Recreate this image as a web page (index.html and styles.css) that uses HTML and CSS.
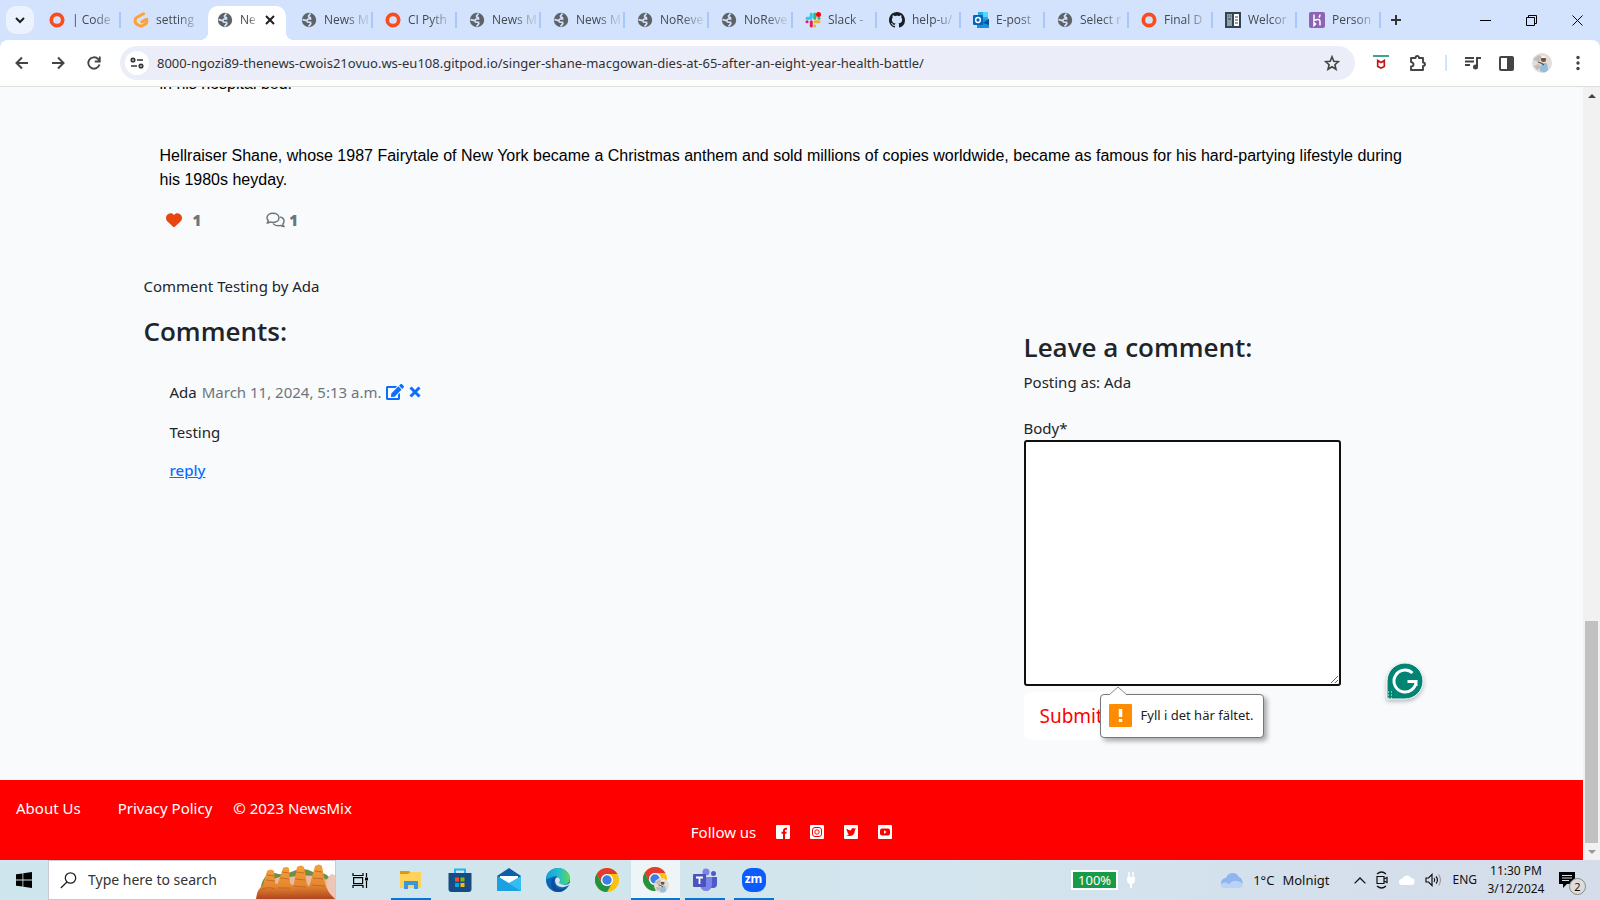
FILE: index.html
```html
<!DOCTYPE html>
<html lang="en">
<head>
<meta charset="utf-8">
<title>NewsMix</title>
<link rel="stylesheet" href="styles.css">
</head>
<body>
<svg class="defs" aria-hidden="true">
  <defs>
    <symbol id="globe" viewBox="0 0 16 16"><circle cx="8" cy="8" r="7.2" fill="#5f6368"/><path d="M9.500 1.500 7.500 4q0 1.500 1.800 1.500L9.500 7H7L5.500 8.500l-4-.8M5.500 8.500l1 1.500 3 .3.300 1.500-2.300 2.700" fill="none" stroke="#d3e3fd" stroke-width="1.700"/></symbol>
    <symbol id="ring" viewBox="0 0 16 16"><circle cx="8" cy="8" r="5.7" fill="none" stroke="#fc4c1e" stroke-width="3.7"/></symbol>
    <symbol id="chrome" viewBox="0 0 24 24"><circle cx="12" cy="12" r="12" fill="#fbc116"/><path d="M1.6 6A12 12 0 0 1 22.4 6H12A6 6 0 0 0 6.8 15z" fill="#e33b2e"/><path d="M1.6 6 6.8 15A6 6 0 0 0 17.2 15L12 24A12 12 0 0 1 1.6 6z" fill="#229342"/><circle cx="12" cy="12" r="6" fill="#fff"/><circle cx="12" cy="12" r="4.7" fill="#3b7de9"/></symbol>
    <symbol id="person" viewBox="0 0 20 20"><circle cx="10" cy="10" r="10" fill="#e2ddd8"/><path d="M1 6l6-4 4 3-5 4zM2 13l5-2 2 4-4 2z" fill="#c4bdb7"/><path d="M8 18c0-6 1-7 4-8s4 3 4 7c-2 3-5 3-8 1z" fill="#93bfdc"/><circle cx="11.500" cy="6.500" r="2.500" fill="#74513f"/><path d="M9 5c1-3 4-3 5 0z" fill="#f5f5f5"/><path d="M6 9l4 1.500 2 1.500" fill="none" stroke="#65483d" stroke-width="1.200"/></symbol>
  </defs>
</svg>

<header class="browser">
  <nav class="tabs" aria-label="Tabs">
    <button class="tab-search" aria-label="Search tabs"><svg width="10" height="8" viewBox="0 0 10 8"><path d="M1 2l4 4 4-4" fill="none" stroke="#1f1f1f" stroke-width="2"/></svg></button>
    <button class="tab"><svg class="fav"><use href="#ring"/></svg><span>| Code</span></button>
    <button class="tab last-before"><svg class="fav" viewBox="0 0 16 16"><path d="M10.500 1.800 4 5.300q-1.800 1-1.800 2.800v1.600q0 1.600 1.500 2.400l3 1.700q1.300.7 2.600 0l3-1.700q1.500-.8 1.500-2.400V7.200L8.900 9.800" fill="none" stroke="#ffa133" stroke-width="3" stroke-linejoin="round" stroke-linecap="round"/></svg><span>setting</span></button>
    <button class="tab active"><svg class="fav"><use href="#globe"/></svg><span>Ne</span><svg class="close" width="10" height="10" viewBox="0 0 10 10"><path d="M1 1l8 8M9 1L1 9" stroke="#1f1f1f" stroke-width="2"/></svg></button>
    <button class="tab"><svg class="fav"><use href="#globe"/></svg><span>News M</span></button>
    <button class="tab"><svg class="fav"><use href="#ring"/></svg><span>CI Pyth</span></button>
    <button class="tab"><svg class="fav"><use href="#globe"/></svg><span>News M</span></button>
    <button class="tab"><svg class="fav"><use href="#globe"/></svg><span>News M</span></button>
    <button class="tab"><svg class="fav"><use href="#globe"/></svg><span>NoReve</span></button>
    <button class="tab"><svg class="fav"><use href="#globe"/></svg><span>NoReve</span></button>
    <button class="tab"><svg class="fav" viewBox="0 0 16 16" fill="none" stroke-width="3" stroke-linecap="round"><path d="M6.300 2v3.500M2 6.300h4" stroke="#36c5f0"/><path d="M9.800 2v4.300M14 6.300h-.1" stroke="#2eb67d"/><path d="M10 9.800h4M9.800 14v-.1" stroke="#ecb22e"/><path d="M6.300 14V9.800M2 9.800h.1" stroke="#e01e5a"/><circle cx="13.500" cy="2.500" r="2.500" fill="#f00" stroke="none"/></svg><span>Slack -</span></button>
    <button class="tab"><svg class="fav" viewBox="0 0 16 16"><path fill="#1b1f24" d="M8 0C3.58 0 0 3.58 0 8c0 3.54 2.29 6.53 5.47 7.59.4.07.55-.17.55-.38 0-.19-.01-.82-.01-1.49-2.01.37-2.53-.49-2.69-.94-.09-.23-.48-.94-.82-1.13-.28-.15-.68-.52-.01-.53.63-.01 1.08.58 1.23.82.72 1.21 1.87.87 2.33.66.07-.52.28-.87.51-1.07-1.78-.2-3.64-.89-3.64-3.95 0-.87.31-1.59.82-2.15-.08-.2-.36-1.02.08-2.12 0 0 .67-.21 2.2.82.64-.18 1.32-.27 2-.27s1.36.09 2 .27c1.53-1.04 2.2-.82 2.2-.82.44 1.1.16 1.92.08 2.12.51.56.82 1.27.82 2.15 0 3.07-1.87 3.75-3.65 3.95.29.25.54.73.54 1.48 0 1.07-.01 1.93-.01 2.2 0 .21.15.46.55.38A8.01 8.01 0 0 0 16 8c0-4.42-3.58-8-8-8z"/></svg><span>help-u/</span></button>
    <button class="tab"><svg class="fav" viewBox="0 0 16 16"><path fill="#28a8ea" d="M5 0h10v8H5z"/><path fill="#50d9ff" d="M10 0h5v5h-5z"/><path fill="#1490df" d="M4 8l12-1v9H4z"/><path fill="#0a4f94" d="M10 11l6-4v6z"/><rect y="3" width="10" height="10" rx="1" fill="#0364b8"/><circle cx="5" cy="8" r="2.400" fill="none" stroke="#fff" stroke-width="1.500"/></svg><span>E-post</span></button>
    <button class="tab"><svg class="fav"><use href="#globe"/></svg><span>Select r</span></button>
    <button class="tab"><svg class="fav"><use href="#ring"/></svg><span>Final D</span></button>
    <button class="tab"><svg class="fav" viewBox="0 0 16 16"><path fill="#33444f" d="M0 0h16v16H0z"/><path fill="#8fa1ab" d="M2 2h5v12H2z"/><path fill="#fff" d="M9 2h5v12H9z"/><path d="M3 4h1M5 4h1M3 7h3M10 5h3M10 8h3M10 11h3" stroke="#33444f"/></svg><span>Welcor</span></button>
    <button class="tab"><svg class="fav" viewBox="0 0 16 16"><rect width="16" height="16" rx="2" fill="#8e63b5"/><path d="M5 2.500v6q6-2.500 6 1v4M5 10.500v3l1.500-1.500zM11 2.500q0 1.800-1 3" fill="none" stroke="#fff" stroke-width="1.500"/></svg><span>Person</span></button>
    <button class="new-tab" aria-label="New tab"><svg width="12" height="12" viewBox="0 0 12 12"><path d="M6 1v10M1 6h10" stroke="#333" stroke-width="2"/></svg></button>
    <div class="window-buttons">
      <button aria-label="Minimize"><svg width="11" height="11"><path d="M0 5.500h11" stroke="#000"/></svg></button>
      <button aria-label="Restore"><svg width="11" height="11" fill="none" stroke="#000"><path d="M.5 2.500h8v8h-8zM2.500 2.500v-2h8v8h-2"/></svg></button>
      <button aria-label="Close"><svg width="11" height="11"><path d="M.5.5l10 10M10.500.5l-10 10" stroke="#000"/></svg></button>
    </div>
  </nav>
  <div class="toolbar">
    <button aria-label="Back"><svg width="16" height="16" viewBox="0 0 16 16"><path d="M14 8H3M8 2.500L2.500 8 8 13.500" fill="none" stroke="#444" stroke-width="2"/></svg></button>
    <button aria-label="Forward"><svg width="16" height="16" viewBox="0 0 16 16"><path d="M2 8h11M8 2.500L13.500 8 8 13.500" fill="none" stroke="#444" stroke-width="2"/></svg></button>
    <button aria-label="Reload"><svg width="16" height="16" viewBox="0 0 16 16"><path d="M13.500 9.500a5.700 5.700 0 1 1-1.400-5.500l1.400 1.500M13.800 1.500v5h-5" fill="none" stroke="#444" stroke-width="1.800"/></svg></button>
    <div class="omnibox">
      <button class="site-info" aria-label="Site information"><svg width="14" height="12" viewBox="0 0 14 12" fill="none" stroke="#333" stroke-width="1.700"><circle cx="3" cy="3" r="1.700"/><path d="M7 3h6M1 9h6"/><circle cx="11" cy="9" r="1.700"/></svg></button>
      <input class="url" aria-label="Address" value="8000-ngozi89-thenews-cwois21ovuo.ws-eu108.gitpod.io/singer-shane-macgowan-dies-at-65-after-an-eight-year-health-battle/">
      <button aria-label="Bookmark"><svg width="16" height="16" viewBox="0 0 16 16"><path d="M8 1.800l1.800 4.400 4.700.4-3.600 3.100 1.100 4.600L8 11.800l-4 2.500 1.100-4.600L1.500 6.600l4.700-.4z" fill="none" stroke="#444" stroke-width="1.600"/></svg></button>
    </div>
    <div class="extensions">
      <button aria-label="McAfee"><svg width="16" height="16" viewBox="0 0 16 16"><path d="M0 1h16" stroke="#3da58a" stroke-width="2"/><path d="M4.700 5.500v6L8 13l3.300-1.500v-6L8 7.500z" fill="none" stroke="#c01818" stroke-width="1.700"/></svg></button>
      <button aria-label="Extensions"><svg width="18" height="18" viewBox="0 0 18 18"><path d="M2 4h4.500q0-2 1.800-2T10 4h4v4.500q2 0 2 1.700T14 12v4H2v-3.500q2.500 0 2.500-2T2 8z" fill="none" stroke="#444" stroke-width="1.900" stroke-linejoin="round"/></svg></button>
      <span class="divider"></span>
      <button aria-label="Media"><svg width="16" height="14" viewBox="0 0 16 14"><path d="M0 2h9M0 5.500h9M0 9h5M12 11V2h4" fill="none" stroke="#444" stroke-width="2"/><circle cx="10.500" cy="11" r="2.500" fill="#444"/></svg></button>
      <button aria-label="Side panel"><svg width="15" height="15" viewBox="0 0 15 15"><rect x="1" y="1" width="13" height="13" rx="1" fill="none" stroke="#444" stroke-width="2"/><path d="M8 1h6v13H8z" fill="#444"/></svg></button>
      <button aria-label="Profile"><svg width="20" height="20"><use href="#person"/></svg></button>
      <button aria-label="Menu"><svg width="4" height="16" fill="#444"><circle cx="2" cy="2.500" r="1.700"/><circle cx="2" cy="8" r="1.700"/><circle cx="2" cy="13.500" r="1.700"/></svg></button>
    </div>
  </div>
</header>

<div class="viewport">
  <div class="page">
    <main class="container">
      <article class="story">
        <p>in his hospital bed.</p>
        <p>Hellraiser Shane, whose 1987 Fairytale of New York became a Christmas anthem and sold millions of copies worldwide, became as famous for his hard-partying lifestyle during his 1980s heyday.</p>
        <div class="reactions">
          <button class="like" aria-label="Like"><svg width="16" height="16" viewBox="0 0 512 512"><path fill="#e84610" d="M47.600 300.400L228.300 469.100c7.500 7 17.400 10.900 27.700 10.900s20.200-3.900 27.700-10.900L464.400 300.400c30.400-28.300 47.600-68 47.600-109.500v-5.800c0-69.900-50.500-129.500-119.400-141C347 36.500 300.600 51.400 268 84L256 96 244 84c-32.600-32.600-79-47.500-124.600-39.900C50.500 55.600 0 115.200 0 185.100v5.800c0 41.500 17.200 81.200 47.600 109.500z"/></svg></button>
          <strong class="likes">1</strong>
          <svg width="19" height="16" viewBox="0 0 19 16" fill="none" stroke="#6c757d" stroke-width="1.500" stroke-linejoin="round"><path d="M7 1.200c3.500 0 6 2 6 4.600s-2.500 4.600-6 4.600q-1.500 0-2.700-.5-1.500 1.200-3.300 1.200 1.200-1.200 1.300-2.500Q1 7.300 1 5.800c0-2.600 2.500-4.600 6-4.600z"/><path d="M14.200 5.100c2.300.6 3.800 2.200 3.800 4.200q0 1.600-1.200 2.800.2 1.300 1.200 2.500-1.800 0-3.300-1.200-1.200.4-2.500.4-3.300 0-5.100-2.200"/></svg>
          <strong>1</strong>
        </div>
      </article>
      <p class="notice">Comment Testing by Ada</p>
      <div class="columns">
        <section class="comments">
          <h3>Comments:</h3>
          <div class="comment">
            <p class="meta">Ada <span>March 11, 2024, 5:13 a.m.</span>
              <a href="#edit" aria-label="Edit"><svg width="18" height="16" viewBox="0 0 576 512"><path fill="#0d6efd" d="M402.600 83.200l90.200 90.200c3.800 3.800 3.800 10 0 13.800L274.400 405.600l-92.800 10.300c-12.400 1.400-22.900-9.100-21.500-21.500l10.300-92.800L388.800 83.200c3.800-3.800 10-3.800 13.800 0zm162-22.900l-48.800-48.800c-15.200-15.200-39.900-15.200-55.200 0l-35.400 35.400c-3.800 3.800-3.800 10 0 13.800l90.200 90.200c3.800 3.800 10 3.800 13.800 0l35.400-35.400c15.200-15.300 15.200-40 0-55.200zM384 346.200V448H64V128h229.800c3.200 0 6.200-1.300 8.500-3.500l40-40c7.600-7.600 2.200-20.500-8.500-20.500H48C21.500 64 0 85.500 0 112v352c0 26.500 21.500 48 48 48h352c26.500 0 48-21.500 48-48V306.200c0-10.700-12.900-16-20.500-8.500l-40 40c-2.200 2.300-3.500 5.300-3.500 8.500z"/></svg></a>
              <a href="#delete" aria-label="Delete"><svg width="12" height="16" viewBox="0 0 12 16"><path d="M1.500 3.500l9 9M10.500 3.500l-9 9" stroke="#0d6efd" stroke-width="3"/></svg></a>
            </p>
            <p>Testing</p>
            <a class="reply" href="#reply">reply</a>
          </div>
        </section>
        <form class="comment-form">
          <h3>Leave a comment:</h3>
          <p>Posting as: Ada</p>
          <label for="body">Body*</label>
          <textarea id="body"></textarea>
          <div class="submit-row">
            <button type="button" class="submit">Submit</button>
            <div class="validation" role="alert">
              <svg class="arrow" width="18" height="9" viewBox="0 0 18 9"><path d="M0 9 9 1l9 8" fill="#fff" stroke="#888"/></svg>
              <svg width="23" height="23" viewBox="0 0 23 23"><rect width="23" height="23" rx="1" fill="#ff8c00"/><path d="M11.500 5v8M11.500 15v3" stroke="#fff" stroke-width="3.500"/></svg>
              <span>Fyll i det här fältet.</span>
            </div>
            <button type="button" class="grammar" aria-label="Grammarly"><svg width="38" height="38" viewBox="0 0 38 38"><path d="M1 37V19A18 18 0 1 1 19 37z" fill="#008575" stroke="#fff"/><path d="M26.500 11A11 11 0 1 0 30 19.500h-8.500M30 19.500V24" fill="none" stroke="#fff" stroke-width="3"/><path d="M2 30h5M2 33h5M2 36h5" stroke="#fff" stroke-dasharray="1 2"/></svg></button>
          </div>
        </form>
      </div>
    </main>
    <footer class="site-footer">
      <div class="links"><a href="#about">About Us</a><a href="#privacy">Privacy Policy</a><span>© 2023 NewsMix</span></div>
      <div class="social">
        <span>Follow us<a class="blank" href="#follow">&nbsp;</a></span>
        <a href="#facebook" aria-label="Facebook"><svg width="14" height="14" viewBox="0 0 14 14"><rect width="14" height="14" rx="1" fill="#fff"/><path d="M8 14V5.500Q8 3.500 11 3.700M5.500 7.800h5" fill="none" stroke="red" stroke-width="2"/></svg></a>
        <a href="#instagram" aria-label="Instagram"><svg width="14" height="14" viewBox="0 0 14 14"><rect width="14" height="14" rx="1" fill="#fff"/><g fill="none" stroke="red"><rect x="2.500" y="2.500" width="9" height="9" rx="2.500"/><circle cx="7" cy="7" r="2.200"/></g></svg></a>
        <a href="#twitter" aria-label="Twitter"><svg width="14" height="14" viewBox="0 0 14 14"><rect width="14" height="14" rx="1" fill="#fff"/><path d="M2.500 3.500Q4.500 5.500 7 5.500 7 3 9 3l1.500.6 1.500-.2-1 1.500Q10.500 11 5.500 11q-2 0-3.200-.9 1.700 0 2.500-.9L3 7.700l1-.1Q2.300 6 2.500 3.500z" fill="red"/></svg></a>
        <a href="#youtube" aria-label="YouTube"><svg width="14" height="14" viewBox="0 0 14 14"><rect width="14" height="14" rx="1" fill="#fff"/><rect x="2" y="3.500" width="10" height="7" rx="2" fill="red"/><path d="M6 5.300v3.400L8.700 7z" fill="#fff"/></svg></a>
      </div>
    </footer>
  </div>
  <div class="scrollbar" aria-hidden="true">
    <svg width="17" height="17"><path d="M5 11h8L9 7z" fill="#444"/></svg>
    <div class="track"><div class="thumb"></div></div>
    <svg width="17" height="17"><path d="M5 7h8l-4 4z" fill="#999"/></svg>
  </div>
</div>

<footer class="taskbar">
  <button class="start" aria-label="Start"><svg width="16" height="16" viewBox="0 0 16 16"><path d="M0 2.300 6.500 1.400v6.200H0zM7.300 1.300 16 0v7.600H7.300zM0 8.400h6.500v6.200L0 13.700zM7.300 8.400H16V16l-8.700-1.300z"/></svg></button>
  <label class="search">
    <svg width="17" height="17" viewBox="0 0 17 17"><circle cx="10.500" cy="6" r="5.200" fill="none" stroke="#222" stroke-width="1.300"/><path d="M7 10 .8 16" stroke="#222" stroke-width="1.300"/></svg>
    <input placeholder="Type here to search" aria-label="Search">
    <svg class="rocks" width="79" height="37" viewBox="0 0 79 37"><defs><linearGradient id="rock" x1="0" x2="0" y1="0" y2="1"><stop offset="0" stop-color="#f5a13a"/><stop offset=".6" stop-color="#e58730"/><stop offset="1" stop-color="#b0441f"/></linearGradient></defs><path d="M5 24q3-13 14-13 8 3 16-1 12-6 22 0 12 0 16 5v20H6z" fill="#6a8f45"/><path d="M14 20q8-7 20-5 22-4 38 3v19H12z" fill="#eab9a0"/><path d="M71 17l4-5 4 1v24h-8z" fill="#edc6b8"/><path d="M50 37q1-9 4-15l5-18q4-3 7 0l3 17q2 9 10 16z" fill="url(#rock)"/><path d="M34 37q2-9 4-16l3-16q4-3 7 0l3 17q6 6 5 15z" fill="url(#rock)"/><path d="M0 37q1-10 7-14l4-14q4-3 7 0l1 12q2 2 3 0l5-15q3-2 6 0l1 15q8 6 8 16z" fill="url(#rock)"/><path d="M11 13l7 1M10 18l9 1M26 10l7 1M24 16l9 1M40 10l8 1M39 17l10 1M37 24l13 1M59 9l7 1M57 16l10 1M55 23l14 1M4 28q8-4 15-1M22 26h12" fill="none" stroke="#b9601f" stroke-width="1" opacity=".75"/></svg>
  </label>
  <button class="task-view" aria-label="Task view"><svg width="17" height="17" viewBox="0 0 17 17" fill="none" stroke="#000" stroke-width="1.200"><path d="M1 1v2.500h10V1M1 16v-2.500h10V16M1.600 5.600h9v6h-9zM14.500 1v4M14.500 9v7"/><path d="M13 5.500h3v3h-3z" fill="#000" stroke="none"/></svg></button>
  <div class="apps">
    <button class="app open" aria-label="File Explorer"><svg width="24" height="24" viewBox="0 0 24 24"><path d="M1 3h9l2 2v3H1z" fill="#d99a0b"/><path d="M1 6h8l3-2h10v16H1z" fill="#ffd35a"/><path d="M5 13h14v8h-4v-4H9v4H5z" fill="#3a97dc"/></svg></button>
    <button class="app" aria-label="Store"><svg width="24" height="24" viewBox="0 0 24 24"><path d="M7 6V1.500h10V6" fill="none" stroke="#1cb6f0" stroke-width="2"/><path d="M.5 5h23v16q0 3-3 3h-17q-3 0-3-3z" fill="#164c83"/><path fill="#f25022" d="M7 9.500h4v4H7z"/><path fill="#7fba00" d="M12.500 9.500h4v4h-4z"/><path fill="#00a4ef" d="M7 15h4v4H7z"/><path fill="#ffb900" d="M12.500 15h4v4h-4z"/></svg></button>
    <button class="app" aria-label="Mail"><svg width="24" height="24" viewBox="0 0 24 24"><path d="M0 8 12 0l12 8v4H0z" fill="#0c5ea8"/><path d="M3 8h18v8H3z" fill="#fff"/><path d="M0 8l12 7 12-7v15H0z" fill="#34bdf0"/><path d="M0 8v15h24z" fill="#1d9fe4"/></svg></button>
    <button class="app" aria-label="Edge"><svg width="24" height="24" viewBox="0 0 24 24"><defs><linearGradient id="edge"><stop stop-color="#159fe0"/><stop offset=".55" stop-color="#24bfca"/><stop offset="1" stop-color="#63d94c"/></linearGradient></defs><circle cx="12" cy="12" r="12" fill="#0c65ba"/><path d="M0 11C0 5 5 0 12 0s12 5 12 10-4 7-8 7q-4 0-3-2 2-3 0-5-3-3-7-1-5 2-6 2z" fill="url(#edge)"/><path d="M8 13q0 7 7 8 5 0 7-3-4 6-10 6-7 0-7-8 0-6 6-8-3 2-3 5z" fill="#114c9a"/><path d="M13 15q2-3 0-5-3-2-4 2 0 6 6 7 5 1 9-3v-1q-6 4-11 0z" fill="#d3e6ee"/></svg></button>
    <button class="app" aria-label="Chrome"><svg width="24" height="24"><use href="#chrome"/></svg></button>
    <button class="app open current" aria-label="Chrome, profile"><svg width="26" height="26" viewBox="0 0 26 26"><use href="#chrome" width="24" height="24"/><use href="#person" x="11" y="11" width="15" height="15"/></svg></button>
    <button class="app open" aria-label="Teams"><svg width="24" height="24" viewBox="0 0 24 24"><circle cx="13" cy="4" r="3.500" fill="#7b83eb"/><circle cx="20.500" cy="5.500" r="2.500" fill="#5059c9"/><path d="M16 9h8v7q0 4-4 4h-4z" fill="#5059c9"/><path d="M7 9h12v8q-1 6-6 6t-6-6z" fill="#7b83eb"/><rect y="6" width="13" height="13" rx="1" fill="#4b53bc"/><path d="M3 9.500h7M6.500 9.500V16" stroke="#fff" stroke-width="1.800"/></svg></button>
    <button class="app open" aria-label="Zoom"><span class="zoom">zm</span></button>
  </div>
  <div class="tray">
    <div class="power"><span class="battery">100%</span><svg width="10" height="16" viewBox="0 0 10 16"><path d="M3 0v5M7 0v5" stroke="#fff" stroke-width="1.500"/><path d="M1 5h8v3q0 3-3 4v4H4v-4Q1 11 1 8z" fill="#fff"/></svg></div>
    <button class="weather"><svg width="25" height="18" viewBox="0 0 25 18"><path d="M6 17a5 5 0 0 1 0-10 7 7 0 0 1 13-1 6 6 0 0 1 0 11z" fill="#8fb6ee"/><path d="M5 17q-4 0-4.500-3Q4 9 9 13q5-6 13-1 2 5-4 5z" fill="#b9d2f7"/></svg><span>1°C</span><span>Molnigt</span></button>
    <button aria-label="Hidden icons"><svg width="12" height="7"><path d="M.6 6.400 6 1l5.400 5.400" fill="none" stroke="#111" stroke-width="1.300"/></svg></button>
    <button aria-label="Meet now"><svg width="12" height="18" viewBox="0 0 12 18" fill="none" stroke="#111" stroke-width="1.200"><path d="M1 3q4.500-4 9 0M1 15q4.500 4 9 0M1 5.500h7v7H1zM8 8l3-1.500v5L8 10"/></svg></button>
    <button aria-label="OneDrive"><svg width="17" height="12" viewBox="0 0 17 12"><path d="M4 11a3 3 0 0 1 0-6 5 5 0 0 1 9-1 3.500 3.500 0 0 1 0 7z" fill="#fff"/></svg></button>
    <button aria-label="Volume"><svg width="17" height="14" viewBox="0 0 17 14" fill="none" stroke="#111" stroke-width="1.200"><path d="M1 5h2.500L7 1.500v11L3.500 9H1zM9 5q1.500 2 0 4M11 3.500q3 3.500 0 7"/><path d="M13.500 1.500q4 5.500 0 11" stroke="#999"/></svg></button>
    <button class="lang">ENG</button>
    <button class="clock"><span>11:30 PM</span><span>3/12/2024</span></button>
    <button class="notices" aria-label="Notifications"><svg width="16" height="16" viewBox="0 0 16 16"><path d="M0 0h16v12H8l-4 4v-4H0z"/><path d="M3 3.500h10M3 6h10M3 8.500h7" stroke="#d5dceb"/></svg><span class="count">2</span></button>
  </div>
</footer>
</body>
</html>
```
FILE: styles.css
```css
* { box-sizing: border-box; }
body { margin: 0; height: 100vh; display: flex; flex-direction: column; overflow: hidden; font: 15px/24px "Noto Sans", "Open Sans", sans-serif; color: #212529; background: #f9fafc; }
button { border: 0; padding: 0; background: none; font: inherit; color: inherit; display: flex; align-items: center; justify-content: center; }
input { border: 0; padding: 0; background: none; font: inherit; outline: 0; min-width: 0; }
p, h3 { margin: 0; }
svg { flex: none; }
.defs { position: absolute; width: 0; height: 0; }

.browser { flex: none; background: #d3e3fd; }
.tabs { display: flex; height: 40px; padding-left: 6px; font-family: "Open Sans", "Noto Sans", sans-serif; font-size: 12px; }
.tab-search { flex: none; width: 28px; height: 28px; margin: 6px 3px 0 0; border-radius: 10px; background: #ecf3fe; }
.tab { position: relative; flex: 0 1 84px; min-width: 0; justify-content: flex-start; gap: 7px; padding: 0 4px 0 12px; color: #45484d; }
.tab::after { content: ""; position: absolute; right: 0; top: 12px; width: 2px; height: 16px; background: #a8c7fa; }
.tab.last-before::after, .tab.active::after { display: none; }
.tab span { flex: 1; min-width: 0; overflow: hidden; text-align: left; white-space: nowrap; mask-image: linear-gradient(90deg, #000 50%, #0003 90%); }
.fav { width: 16px; height: 16px; }
.tab.active { flex-basis: 78px; height: 34px; margin: 6px 3px 0; padding: 0 11px 6px 9px; border-radius: 10px 10px 0 0; background: #fff; }
.tab.active::before { content: ""; position: absolute; left: -8px; right: -8px; bottom: 0; height: 8px; background: radial-gradient(circle at 0 0, transparent 8px, #fff 8px) left / 8px 8px no-repeat, radial-gradient(circle at 100% 0, transparent 8px, #fff 8px) right / 8px 8px no-repeat; }
.new-tab { flex: none; width: 30px; }
.window-buttons { display: flex; flex: none; margin-left: auto; }
.window-buttons button { width: 46px; }
.toolbar { display: flex; align-items: center; height: 47px; padding: 0 14px 0 4px; background: #fff; border-bottom: 1px solid #dde1da; border-radius: 8px 8px 0 0; }
.toolbar > button { width: 36px; height: 34px; }
.omnibox { display: flex; flex: 1; align-items: center; height: 34px; margin-left: 8px; padding: 0 15px 0 5px; border-radius: 17px; background: #ebeef8; }
.site-info { width: 24px; height: 24px; border-radius: 50%; background: #fff; }
.url { flex: 1; margin-left: 8px; font-size: 13px; color: #303134; }
.extensions { display: flex; align-items: center; margin-left: 18px; gap: 18px; }
.extensions button:nth-child(2) { margin-left: 2px; }
.extensions .divider { width: 2px; height: 16px; background: #d3e3fd; }
.extensions button:last-child { width: 16px; }

.viewport { display: flex; flex: 1; min-height: 0; }
.page { flex: 1; min-width: 0; display: flex; flex-direction: column; overflow: hidden; }
.container { width: 100%; max-width: 1320px; margin: 0 auto; padding: 0 12px; }
.story { padding: 0 16px; color: #000; font-family: "Liberation Sans", Arial, sans-serif; font-size: 16px; }
.story p { margin-bottom: 48px; }
.story p:first-child { margin-top: -15px; }
.story p:nth-child(2) { margin-bottom: 16px; }
.reactions { display: flex; align-items: center; height: 24px; padding-left: 6px; color: #6c757d; font: 700 15px/24px "Noto Sans", sans-serif; gap: 4px; }
.likes { margin-left: 7px; margin-right: 61px; }
.notice { margin: 42px 0 16px; }
h3 { font: 600 26px/34px "Open Sans", "Noto Sans", sans-serif; }
.columns { display: grid; grid-template-columns: 2fr 1fr; margin-right: -24px; }
.comments h3 { margin-bottom: 32px; }
.comment { padding-left: 26px; }
.comment p { margin-bottom: 16px; }
.comment .meta { display: flex; align-items: center; gap: 5px; }
.comment p:nth-child(2) { margin-bottom: 14px; }
.meta span { color: #6c757d; }
.meta a { display: flex; }
.reply { color: #0d6efd; font-weight: 500; }
.comment-form { padding-top: 16px; }
.comment-form h3 { margin-bottom: 6px; }
.comment-form p { margin-bottom: 22px; }
.comment-form label { display: block; }
.comment-form textarea { display: block; width: 317px; height: 246px; border: 2px solid #101010; border-radius: 3px; background: #fff; outline: 0; }
.submit-row { position: relative; padding-top: 6px; }
.submit { height: 48px; padding: 0 16px; border-radius: 8px; background: #fff; color: red; font-size: 19px; }
.validation { position: absolute; left: 76px; top: 8px; display: flex; align-items: center; gap: 9px; height: 44px; padding: 0 9px 2px 8px; border: 1px solid #777; border-radius: 4px; background: #fff; box-shadow: 3px 3px 5px #0005; color: #222; font-size: 13px; white-space: nowrap; }
.arrow { position: absolute; left: 8px; top: -9px; }
.grammar { position: absolute; left: 362px; top: -24px; filter: drop-shadow(0 2px 2px #0004); }
.site-footer { margin-top: auto; padding: 16px 16px; height: 80px; background: red; color: #fff; }
.site-footer a { color: #fff; text-decoration: none; }
.links { display: flex; }
.links a:first-child { margin-right: 37px; }
.links a { margin-right: 21px; }
.social { display: flex; align-items: center; justify-content: center; gap: 20px; }
.social a { display: flex; }
.social span { margin-right: -4px; }
.social .blank { display: inline; color: #0d6efd; text-decoration: underline; }
.scrollbar { display: flex; flex-direction: column; width: 17px; background: #f1f1f1; }
.track { flex: 1; display: flex; padding: 0 2px; align-items: flex-end; }
.thumb { flex: 1; height: 30%; background: #c1c1c1; }

.taskbar { flex: none; display: flex; height: 40px; background: linear-gradient(90deg, #cfe5ed, #d3e5ee 60%, #d5dcea); color: #111; }
.start { width: 48px; }
.search { display: flex; align-items: center; width: 288px; padding-left: 11px; border: 1px solid #c5cbd0; background: #fff; }
.search input { flex: 1; margin-left: 11px; font-size: 14px; }
.search input::placeholder { color: #333; opacity: 1; }
.rocks { align-self: flex-end; }
.task-view { width: 48px; }
.apps { display: flex; margin-left: 2px; }
.app { position: relative; width: 49px; }
.app.open::after { content: ""; position: absolute; bottom: 0; left: 5px; right: 4px; height: 2px; background: #0078d7; }
.app.current { background: #edf5f9; }
.app.current::after { left: 0; right: 0; }
.zoom { width: 24px; height: 24px; border-radius: 9px; background: #0b5cff; color: #fff; font-size: 12px; font-weight: 700; line-height: 22px; }
.tray { display: flex; align-items: center; margin-left: auto; gap: 10px; font-size: 13px; }
.power { display: flex; align-items: center; gap: 8px; margin-right: 74px; }
.battery { padding: 0 5px; border: 2px solid #fff; background: #169b48; color: #fff; line-height: 16px; }
.weather { gap: 8px; margin-right: 15px; }
.lang { font-size: 12px; }
.clock { flex-direction: column; width: 58px; font-size: 12px; line-height: 18px; }
.notices { position: relative; width: 24px; height: 40px; margin-right: 21px; }
.count { position: absolute; right: -7px; bottom: 5px; width: 17px; height: 17px; border: 1px solid #888; border-radius: 50%; background: #ddd; font-size: 11px; line-height: 15px; }
```
